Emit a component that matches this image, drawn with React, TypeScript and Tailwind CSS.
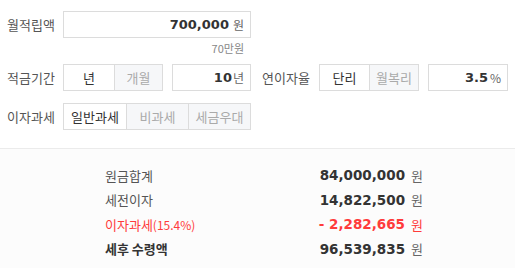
const KR = "font-['Noto_Sans_CJK_KR','Noto_Sans',sans-serif]";
const NUM = "font-['DejaVu_Sans',sans-serif]";

const Seg = ({ items, active, widths }: { items: string[]; active: number; widths: string[] }) => (
  <div className="flex border border-[#dcdcdc] h-[27px]">
    {items.map((t, i) => (
      <div
        key={t}
        className={`${widths[i]} flex items-center justify-center text-[13px] ${
          i > 0 ? "border-l border-[#dcdcdc]" : ""
        } ${i === active ? "bg-white text-[#333]" : "bg-[#f6f7f9] text-[#aaa]"}`}
      >
        {t}
      </div>
    ))}
  </div>
);

const Field = ({ value, unit, w, gap }: { value: string; unit: string; w: string; gap: string }) => (
  <div className={`${w} h-[27px] border border-[#dcdcdc] bg-white flex items-center justify-end pr-[6px]`}>
    <span className={`${NUM} font-bold text-[13px] text-[#333]`}>{value}</span>
    <span className={`text-[12px] text-[#666] ${gap}`}>{unit}</span>
  </div>
);

const Row = ({ label, value, red, bold }: { label: React.ReactNode; value: string; red?: boolean; bold?: boolean }) => (
  <div className="flex items-center justify-between h-[24.5px]">
    <span className={`text-[13px] ${red ? "text-[#ff3b3b]" : bold ? "text-[#333] font-bold" : "text-[#555]"}`}>
      {label}
    </span>
    <span className="flex items-center">
      <span className={`${NUM} font-bold text-[13.5px] ${red ? "text-[#ff3b3b]" : "text-[#333]"}`}>{value}</span>
      <span className={`text-[13px] ml-[6px] ${red ? "text-[#ff3b3b]" : "text-[#666]"}`}>원</span>
    </span>
  </div>
);

export default function App() {
  return (
    <div className={`${KR} w-[515px] h-[268px] bg-white flex flex-col`}>
      <div className="pl-[7px] pt-[11px] pb-[18px] border-b border-[#ebebeb]">
        <div className="flex items-center">
          <span className="w-[56px] text-[13px] text-[#555]">월적립액</span>
          <Field value="700,000" unit="원" w="w-[188px]" gap="ml-[4px]" />
        </div>
        <div className="w-[243px] text-right text-[11px] text-[#888] leading-[16px] mt-[2px] pr-[6px]">70만원</div>
        <div className="flex items-center mt-[8px]">
          <span className="w-[56px] text-[13px] text-[#555]">적금기간</span>
          <Seg items={["년", "개월"]} active={0} widths={["w-[50px]", "w-[48px]"]} />
          <div className="ml-[9px]">
            <Field value="10" unit="년" w="w-[79px]" gap="ml-[1px]" />
          </div>
          <span className="ml-[11px] w-[57px] text-[13px] text-[#555]">연이자율</span>
          <Seg items={["단리", "월복리"]} active={0} widths={["w-[49px]", "w-[49px]"]} />
          <div className="ml-[9px]">
            <Field value="3.5" unit="%" w="w-[80px]" gap="ml-[2px]" />
          </div>
        </div>
        <div className="flex items-center mt-[12px]">
          <span className="w-[56px] text-[13px] text-[#555]">이자과세</span>
          <Seg items={["일반과세", "비과세", "세금우대"]} active={0} widths={["w-[62px]", "w-[62px]", "w-[62px]"]} />
        </div>
      </div>
      <div className="flex-1 bg-[#fcfcfc] pt-[14px]">
        <div className="ml-[105px] w-[318px]">
          <Row label="원금합계" value="84,000,000" />
          <Row label="세전이자" value="14,822,500" />
          <Row
            label={
              <>
                이자과세<span className="text-[12px]">(15.4%)</span>
              </>
            }
            value="- 2,282,665"
            red
          />
          <Row label="세후 수령액" value="96,539,835" bold />
        </div>
      </div>
    </div>
  );
}
